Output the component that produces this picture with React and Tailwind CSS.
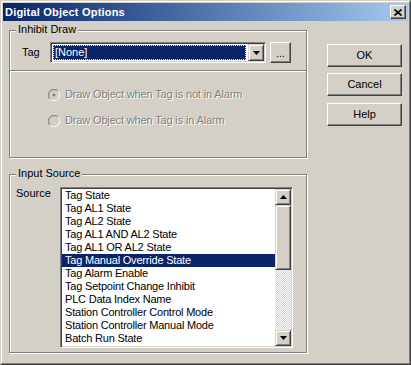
import React from 'react';

const items = [
    'Tag State',
    'Tag AL1 State',
    'Tag AL2 State',
    'Tag AL1 AND AL2 State',
    'Tag AL1 OR AL2 State',
    'Tag Manual Override State',
    'Tag Alarm Enable',
    'Tag Setpoint Change Inhibit',
    'PLC Data Index Name',
    'Station Controller Control Mode',
    'Station Controller Manual Mode',
    'Batch Run State',
];

// raised push button (OK / Cancel / Help)
function PushButton({ children, className = '' }) {
    return (
        <button
            className={`w-[75px] h-[23px] flex items-center justify-center bg-[#d4d0c8] border border-t-white border-l-white border-r-[#404040] border-b-[#404040] shadow-[inset_-1px_-1px_0_#808080] text-[11px] text-black ${className}`}
        >
            {children}
        </button>
    );
}

// small raised button used inside scrollbars and the combo
function ArrowButton({ dir = 'down', className = '' }) {
    return (
        <div
            className={`flex items-center justify-center bg-[#d4d0c8] border border-t-[#d4d0c8] border-l-[#d4d0c8] border-r-[#404040] border-b-[#404040] shadow-[inset_1px_1px_0_#fff,inset_-1px_-1px_0_#808080] ${className}`}
        >
            {dir !== 'none' && (
                <svg width="7" height="4" viewBox="0 0 7 4">
                    {dir === 'down' ? (
                        <polygon points="0,0 7,0 3.5,4" fill="#000" />
                    ) : (
                        <polygon points="0,4 7,4 3.5,0" fill="#000" />
                    )}
                </svg>
            )}
        </div>
    );
}

function Radio({ checked }) {
    return (
        <svg width="12" height="12" viewBox="0 0 12 12" className="shrink-0">
            <circle cx="6" cy="6" r="5" fill="#d4d0c8" />
            <path d="M1.76 10.24 A6 6 0 0 1 10.24 1.76" fill="none" stroke="#808080" strokeWidth="1" />
            <path d="M10.24 1.76 A6 6 0 0 1 1.76 10.24" fill="none" stroke="#fff" strokeWidth="1" />
            <path d="M2.47 9.53 A5 5 0 0 1 9.53 2.47" fill="none" stroke="#b0aca4" strokeWidth="1" />
            {checked && <circle cx="6" cy="6" r="1.6" fill="#808080" />}
        </svg>
    );
}

function GroupBox({ label, className = '', children }) {
    return (
        <div className={`relative border border-[#808080] shadow-[1px_1px_0_#fff,inset_1px_1px_0_#fff] ${className}`}>
            <span className="absolute left-[6px] top-[-8px] px-[2px] bg-[#d4d0c8] text-[11px] leading-[13px] text-black">
                {label}
            </span>
            {children}
        </div>
    );
}

export default function App() {
    return (
        <div className="w-[411px] h-[365px] flex bg-[#d4d0c8] border border-t-[#d4d0c8] border-l-[#d4d0c8] border-r-[#404040] border-b-[#404040] font-['Liberation_Sans',Arial,sans-serif] text-[11px] select-none">
            <div className="flex-1 flex flex-col p-[1px] border border-t-white border-l-white border-r-[#808080] border-b-[#808080]">
                {/* Title bar */}
                <div className="h-[18px] flex items-center justify-between pl-[2px] pr-[2px] bg-gradient-to-r from-[#0a246a] to-[#a6caf0]">
                    <span className="text-white font-bold text-[11px] leading-[13px] tracking-[0.2px]">Digital Object Options</span>
                    <div className="w-[16px] h-[14px] flex items-center justify-center bg-[#d4d0c8] border border-t-white border-l-white border-r-[#404040] border-b-[#404040] shadow-[inset_-1px_-1px_0_#808080]">
                        <svg width="8" height="7" viewBox="0 0 8 7">
                            <path d="M0.5 0.5 L7.5 6.5 M7.5 0.5 L0.5 6.5" stroke="#000" strokeWidth="1.6" />
                        </svg>
                    </div>
                </div>

                {/* Body */}
                <div className="flex pl-[6px] pt-[9px]">
                    <div className="flex flex-col">
                        <GroupBox label="Inhibit Draw" className="w-[298px] h-[128px]">
                            <div className="flex items-center pl-[12px] pt-[11px]">
                                <span className="w-[28px] leading-[13px]">Tag</span>
                                <div className="w-[216px] h-[21px] flex p-[1px] bg-white border border-t-[#808080] border-l-[#808080] border-r-white border-b-white shadow-[inset_1px_1px_0_#404040,inset_-1px_-1px_0_#d4d0c8]">
                                    <div className="flex-1 m-[1px] mr-[2px] flex items-center pl-[1px] bg-[#0a246a] border border-dotted border-[#f4eea8] text-white leading-[13px]">
                                        [None]
                                    </div>
                                    <ArrowButton dir="down" className="w-[16px] h-[17px]" />
                                </div>
                                <button className="ml-[4px] w-[21px] h-[21px] flex items-end justify-center pb-[5px] bg-[#d4d0c8] border border-t-white border-l-white border-r-[#404040] border-b-[#404040] shadow-[inset_-1px_-1px_0_#808080] text-[11px] leading-[8px] text-black">
                                    ...
                                </button>
                            </div>
                            <div className="mt-[7px] h-[2px] border-t border-[#808080] border-b-white border-b" />
                            <div className="flex flex-col gap-[13px] pl-[38px] pt-[16px] text-[#808080] tracking-[-0.15px] [text-shadow:1px_1px_0_#fff]">
                                <div className="flex items-center gap-[5px] h-[13px] leading-[13px]">
                                    <Radio checked />
                                    <span>Draw Object when Tag is not in Alarm</span>
                                </div>
                                <div className="flex items-center gap-[5px] h-[13px] leading-[13px]">
                                    <Radio />
                                    <span>Draw Object when Tag is in Alarm</span>
                                </div>
                            </div>
                        </GroupBox>

                        <GroupBox label="Input Source" className="mt-[16px] w-[298px] h-[179px]">
                            <div className="flex pl-[6px] pt-[12px]">
                                <span className="w-[44px] leading-[13px]">Source</span>
                                <div className="w-[233px] h-[161px] flex p-[1px] bg-white border border-t-[#808080] border-l-[#808080] border-r-white border-b-white shadow-[inset_1px_1px_0_#404040,inset_-1px_-1px_0_#d4d0c8]">
                                    <div className="flex-1 overflow-hidden">
                                        {items.map((it, i) => (
                                            <div
                                                key={it}
                                                className={`h-[13px] leading-[13px] pl-[3px] whitespace-nowrap tracking-[-0.2px] ${i === 5 ? 'bg-[#0a246a] text-white' : 'text-black'}`}
                                            >
                                                {it}
                                            </div>
                                        ))}
                                    </div>
                                    <div className="w-[16px] flex flex-col">
                                        <ArrowButton dir="up" className="h-[16px]" />
                                        <ArrowButton dir="none" className="h-[65px]" />
                                        <div className="flex-1 bg-[repeating-conic-gradient(#ffffff_0%_25%,#d4d0c8_0%_50%)] bg-[length:2px_2px]" />
                                        <ArrowButton dir="down" className="h-[16px]" />
                                    </div>
                                </div>
                            </div>
                        </GroupBox>
                    </div>

                    {/* Buttons */}
                    <div className="flex flex-col ml-[20px] mt-[14px]">
                        <PushButton>OK</PushButton>
                        <PushButton className="mt-[6px]">Cancel</PushButton>
                        <PushButton className="mt-[7px]">Help</PushButton>
                    </div>
                </div>
            </div>
        </div>
    );
}
